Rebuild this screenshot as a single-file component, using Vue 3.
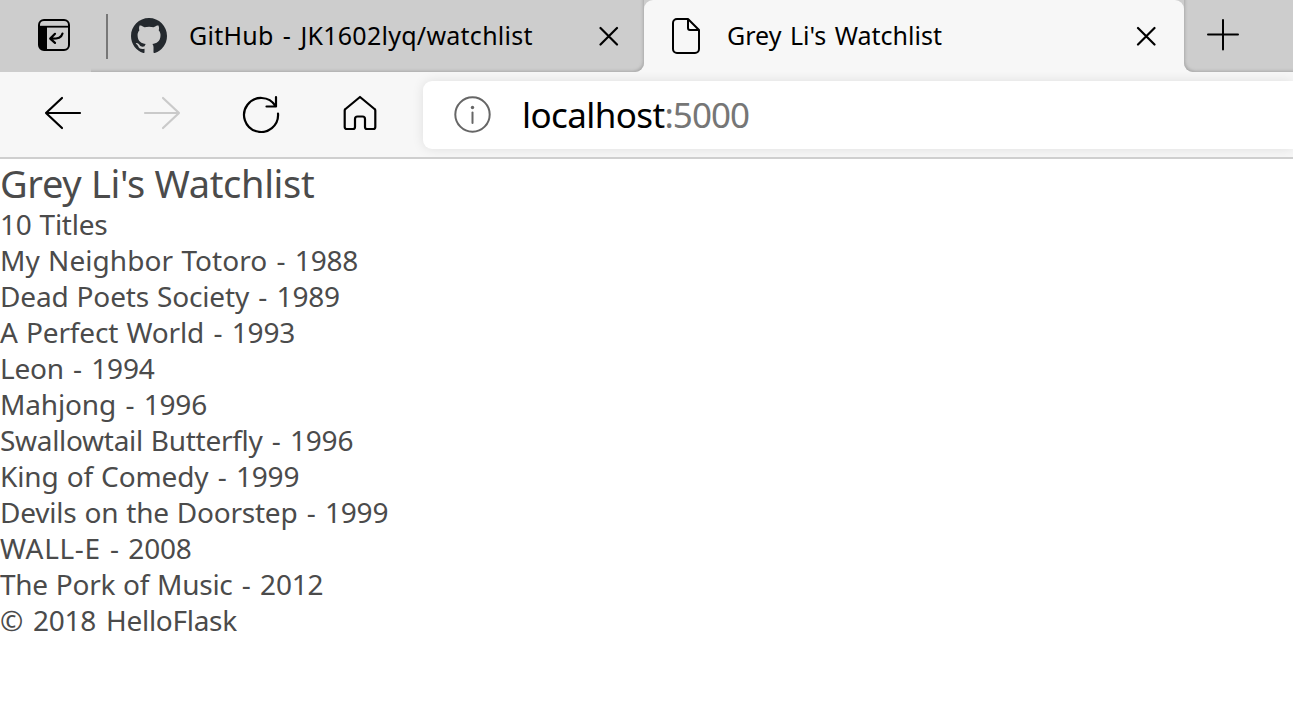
<script setup>
// tracking: letter spacing of the title, in px
const movies = [
  { title: 'My Neighbor Totoro', year: 1988, tracking: 0.05 },
  { title: 'Dead Poets Society', year: 1989, tracking: -0.17 },
  { title: 'A Perfect World', year: 1993, tracking: -0.13 },
  { title: 'Leon', year: 1994, tracking: -0.25 },
  { title: 'Mahjong', year: 1996, tracking: -0.14 },
  { title: 'Swallowtail Butterfly', year: 1996, tracking: -0.3 },
  { title: 'King of Comedy', year: 1999, tracking: -0.14 },
  { title: 'Devils on the Doorstep', year: 1999, tracking: -0.23 },
  { title: 'WALL-E', year: 2008, tracking: 0.67 },
  { title: 'The Pork of Music', year: 2012, tracking: -0.28 },
]
</script>

<template>
  <div class="window">
    <div class="tabs">
      <div class="actions">
        <svg width="32" height="32" viewBox="0 0 32 32" fill="none">
          <path d="M1 8h8v23H6a5 5 0 0 1-5-5z" fill="#000" />
          <rect x="1" y="1" width="30" height="30" rx="5" stroke="#000" stroke-width="2" />
          <path d="M1 7.7h30" stroke="#000" stroke-width="1.8" />
          <path d="M24.5 14.5c-1 4-4 5.4-12 5.2M17 14.8l-4.8 4.8 4.8 4.3" stroke="#000" stroke-width="2.2" stroke-linecap="round" stroke-linejoin="round" />
        </svg>
      </div>
      <div class="tab idle">
        <span class="divider"></span>
        <svg class="github" width="36" height="36" viewBox="0 0 16 16">
          <path fill="#24292e" d="M8 0C3.58 0 0 3.58 0 8c0 3.54 2.29 6.53 5.47 7.59.4.07.55-.17.55-.38 0-.19-.01-.82-.01-1.49-2.01.37-2.53-.49-2.69-.94-.09-.23-.48-.94-.82-1.13-.28-.15-.68-.52-.01-.53.63-.01 1.08.58 1.23.82.72 1.21 1.87.87 2.33.66.07-.52.28-.87.51-1.07-1.78-.2-3.64-.89-3.64-3.95 0-.87.31-1.59.82-2.15-.08-.2-.36-1.02.08-2.12 0 0 .67-.21 2.2.82.64-.18 1.32-.27 2-.27.68 0 1.36.09 2 .27 1.53-1.04 2.2-.82 2.2-.82.44 1.1.16 1.92.08 2.12.51.56.82 1.27.82 2.15 0 3.07-1.87 3.75-3.65 3.95.29.25.54.73.54 1.48 0 1.07-.01 1.93-.01 2.2 0 .21.15.46.55.38A8.013 8.013 0 0 0 16 8c0-4.42-3.58-8-8-8z" />
        </svg>
        <span class="label">GitHub - JK1602lyq/watchlist</span>
        <svg class="close" width="20" height="20" viewBox="0 0 20 20"><path d="M1.500 2l16.500 16.500M18 2L1.500 18.500" /></svg>
      </div>
      <div class="tab active">
        <svg class="file" width="28" height="36" viewBox="0 0 28 36"><path d="M5 1h11l11 11v19a4 4 0 0 1-4 4H5a4 4 0 0 1-4-4V5a4 4 0 0 1 4-4zM16 1v9a2 2 0 0 0 2 2h9" /></svg>
        <span class="label">Grey Li's Watchlist</span>
        <svg class="close" width="20" height="20" viewBox="0 0 20 20"><path d="M2 2l16.500 16.500M18.500 2L2 18.500" /></svg>
      </div>
      <div class="rest">
        <svg class="plus" width="32" height="32" viewBox="0 0 32 32"><path d="M1 15.500h30M16 1v29.500" /></svg>
      </div>
    </div>
    <div class="toolbar">
      <div class="nav">
        <svg width="38" height="38" viewBox="0 0 38 38"><path d="M36 18H2M18 3L2 18l16 15" /></svg>
        <svg class="off" width="38" height="38" viewBox="0 0 38 38"><path d="M2 18h34M20 3l16 15-16 15" /></svg>
        <svg width="38" height="38" viewBox="0 0 38 38"><path d="M36 18.500A17 17 0 1 1 33.500 11M34 2v9.500H24.500" /></svg>
        <svg width="38" height="38" viewBox="0 0 38 38"><path d="M19 2L4.500 14a2 2 0 0 0-.8 1.600V32a2 2 0 0 0 2 2H12a2 2 0 0 0 2-2V24a2.500 2.500 0 0 1 2.500-2.500h5A2.500 2.500 0 0 1 24 24v8a2 2 0 0 0 2 2h6.300a2 2 0 0 0 2-2V15.600a2 2 0 0 0-.8-1.600z" /></svg>
      </div>
      <div class="address">
        <svg width="38" height="38" viewBox="0 0 38 38">
          <circle cx="19.500" cy="18.500" r="17.200" fill="none" stroke="#666" stroke-width="2" />
          <circle cx="19.500" cy="11.500" r="1.700" fill="#666" />
          <path d="M19.500 16.500v10.500" stroke="#666" stroke-width="2" stroke-linecap="round" />
        </svg>
        <span class="url">localhost<span class="port">:5000</span></span>
      </div>
    </div>
    <main>
      <h2>Grey Li's Watchlist</h2>
      <p>10 Titles</p>
      <ul>
        <li v-for="m in movies" :key="m.title">
          <span class="title" :style="{ letterSpacing: m.tracking + 'px' }">{{ m.title }}</span><span class="dash"> - </span><span class="year">{{ m.year }}</span>
        </li>
      </ul>
      <footer>© 2018 HelloFlask</footer>
    </main>
  </div>
</template>

<style>
body { background: #fff; overflow: hidden; }
</style>

<style scoped>
.window { width: 1293px; height: 710px; overflow: hidden; font-family: "Noto Sans", "Open Sans", sans-serif; }
svg { display: block; flex: none; }
.tabs { display: flex; height: 72px; background: linear-gradient(#cdcdcd 30px, #f7f7f7 30px); }
.actions { width: 91px; box-sizing: border-box; padding: 19px 0 0 38px; background: #cdcdcd; }
.tab { display: flex; align-items: center; box-sizing: border-box; }
.idle { width: 553px; padding: 0 25px 0 15px; background: #cdcdcd; border-radius: 0 0 9px 0; box-shadow: inset -2px -2px 3px -1px #aaa; }
.divider { width: 2px; height: 45px; margin-right: 23px; background: #777; }
.github { margin-right: 22px; }
.active { width: 540px; padding: 0 28px; background: #f7f7f7; border-radius: 9px 9px 0 0; }
.file { margin-right: 27px; fill: none; stroke: #000; stroke-width: 2; stroke-linejoin: round; }
.label { flex: 1; padding-bottom: 2px; font-size: 25px; line-height: 34px; word-spacing: 2px; color: #000; white-space: nowrap; }
.idle .label { letter-spacing: 0.26px; word-spacing: 2.5px; }
.close { stroke: #000; stroke-width: 2.2; stroke-linecap: round; }
.rest { flex: 1; padding: 19px 0 0 23px; background: #cdcdcd; border-radius: 0 0 0 9px; box-shadow: inset 2px -2px 3px -1px #aaa; }
.plus { stroke: #000; stroke-width: 2; stroke-linecap: round; }
.toolbar { display: flex; height: 87px; box-sizing: border-box; background: #f7f7f7; border-bottom: 2px solid #cfcfcf; overflow: hidden; }
.nav { display: flex; gap: 61px; width: 423px; box-sizing: border-box; padding: 23px 0 0 44px; }
.nav svg { fill: none; stroke: #000; stroke-width: 2.2; stroke-linecap: round; stroke-linejoin: round; }
.nav .off { stroke: #cacaca; }
.address { flex: 1; display: flex; align-items: center; height: 68px; box-sizing: border-box; margin-top: 9px; padding-left: 30px; background: #fff; border-radius: 9px 0 0 9px; box-shadow: 0 0 12px rgba(0, 0, 0, 0.1); }
.url { margin-left: 31px; font-size: 35px; line-height: 48px; letter-spacing: -0.6px; color: #000; white-space: nowrap; }
.port { letter-spacing: -1px; color: #767676; }
main { color: #4b4b4b; font-size: 28px; line-height: 36px; }
h2 { margin: 0; padding-top: 1px; font-size: 38px; line-height: 46px; letter-spacing: -0.33px; font-weight: 400; }
p { margin: 0; letter-spacing: -0.25px; word-spacing: 1px; }
ul { margin: 0; padding: 0; list-style: none; }
.title { word-spacing: 1px; }
.dash { white-space: pre; word-spacing: 2px; }
.year { letter-spacing: -0.2px; }
footer { letter-spacing: -0.28px; word-spacing: 3px; }
</style>
